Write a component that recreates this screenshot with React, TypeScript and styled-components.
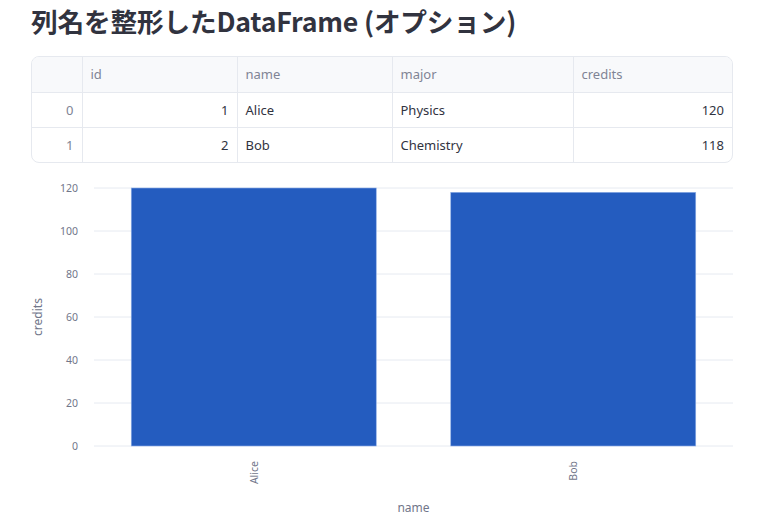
import React from 'react';
import styled, { createGlobalStyle } from 'styled-components';

const GlobalStyle = createGlobalStyle`
  html, body {
    margin: 0;
    padding: 0;
    background: #ffffff;
  }
  body {
    font-family: "Noto Sans", "Noto Sans CJK JP", sans-serif;
    color: #31333f;
  }
`;

const SPage = styled.main`
  width: 770px;
  height: 532px;
  padding: 0 37px 0 31px;
  box-sizing: border-box;
  overflow: hidden;
`;

const STitle = styled.h1`
  margin: 0;
  padding-top: 3px;
  height: 56px;
  box-sizing: border-box;
  font-family: "Noto Sans CJK JP", "Noto Sans", sans-serif;
  font-size: 26.7px;
  font-weight: 700;
  line-height: 36px;
  letter-spacing: -0.2px;
  color: #31333f;
`;

const STableWrap = styled.div`
  border: 1px solid #e6e9ef;
  border-radius: 8px;
  overflow: hidden;
`;

const STable = styled.table`
  width: 100%;
  border-collapse: collapse;
  table-layout: fixed;
  font-family: "Noto Sans", sans-serif;
  font-size: 13px;
`;

const SHeadRow = styled.tr`
  background: #f8f9fb;
  height: 35px;
`;

const SRow = styled.tr`
  height: 35px;
  border-top: 1px solid #e6e9ef;
`;

const SHeadCell = styled.th<{ $w?: number }>`
  box-sizing: border-box;
  width: ${(p) => (p.$w ? `${p.$w}px` : 'auto')};
  padding: 0 8px;
  text-align: left;
  font-weight: 400;
  color: #808495;
  border-left: 1px solid #e6e9ef;
  &:first-child {
    border-left: none;
  }
`;

const SCell = styled.td<{ $align?: 'left' | 'right'; $muted?: boolean }>`
  box-sizing: border-box;
  padding: 0 8px;
  text-align: ${(p) => p.$align ?? 'left'};
  color: ${(p) => (p.$muted ? '#808495' : '#31333f')};
  border-left: 1px solid #e6e9ef;
  &:first-child {
    border-left: none;
  }
`;

const SChart = styled.svg`
  display: block;
  margin-top: 7px;
  overflow: visible;
  font-family: "Noto Sans", sans-serif;
`;

const rows = [
  { idx: 0, id: 1, name: 'Alice', major: 'Physics', credits: 120 },
  { idx: 1, id: 2, name: 'Bob', major: 'Chemistry', credits: 118 },
];

const ticks = [0, 20, 40, 60, 80, 100, 120];

const BarChart = () => {
  const left = 63;
  const right = 702;
  const y0 = 276;
  const scale = 2.15;
  const band = (right - left) / rows.length;
  const barW = 245;

  return (
    <SChart width={702} height={362} viewBox="0 0 702 362">
      {ticks.map((t) => {
        const y = y0 - t * scale;
        return (
          <g key={t}>
            <line x1={left} x2={right} y1={y} y2={y} stroke="#e6eaf1" strokeWidth={1} />
            <text x={47} y={y + 4} fontSize={10.5} fill="#71768a" textAnchor="end">
              {t}
            </text>
          </g>
        );
      })}
      {rows.map((r, i) => {
        const cx = left + band * (i + 0.5);
        const h = r.credits * scale;
        return (
          <g key={r.name}>
            <rect
              x={cx - barW / 2}
              y={y0 - h}
              width={barW}
              height={h}
              fill="#245cbf"
              stroke="#8fb0e6"
              strokeWidth={0.6}
            />
            <text
              transform={`translate(${cx + 4}, 291) rotate(-90)`}
              fontSize={10.5}
              fill="#71768a"
              textAnchor="end"
            >
              {r.name}
            </text>
          </g>
        );
      })}
      <text
        transform="translate(11, 147) rotate(-90)"
        fontSize={12}
        fill="#71768a"
        textAnchor="middle"
      >
        credits
      </text>
      <text x={(left + right) / 2} y={342} fontSize={12} fill="#71768a" textAnchor="middle">
        name
      </text>
    </SChart>
  );
};

const App = () => {
  return (
    <SPage>
      <GlobalStyle />
      <STitle>列名を整形したDataFrame (オプション)</STitle>
      <STableWrap>
        <STable>
          <thead>
            <SHeadRow>
              <SHeadCell $w={50} />
              <SHeadCell $w={155}>id</SHeadCell>
              <SHeadCell $w={155}>name</SHeadCell>
              <SHeadCell $w={181}>major</SHeadCell>
              <SHeadCell>credits</SHeadCell>
            </SHeadRow>
          </thead>
          <tbody>
            {rows.map((r) => (
              <SRow key={r.idx}>
                <SCell $align="right" $muted>
                  {r.idx}
                </SCell>
                <SCell $align="right">{r.id}</SCell>
                <SCell>{r.name}</SCell>
                <SCell>{r.major}</SCell>
                <SCell $align="right">{r.credits}</SCell>
              </SRow>
            ))}
          </tbody>
        </STable>
      </STableWrap>
      <BarChart />
    </SPage>
  );
};

export default App;
